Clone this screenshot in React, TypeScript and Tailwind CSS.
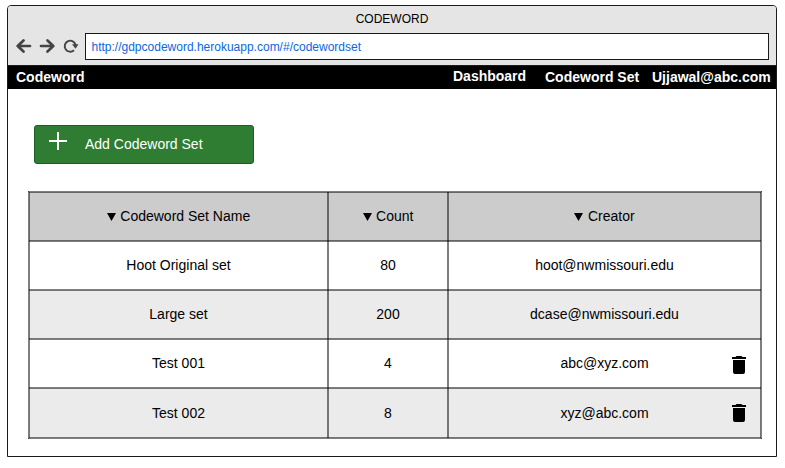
import type { ReactNode } from "react";

const cellLines =
  "shadow-[inset_1px_0_rgba(0,0,0,0.5),inset_-1px_0_rgba(0,0,0,0.5),inset_0_1px_rgba(0,0,0,0.5),inset_0_-1px_rgba(0,0,0,0.5)]";

const rows = [
  { name: "Hoot Original set", count: 80, creator: "hoot@nwmissouri.edu", look: "bg-white pt-[14px]" },
  { name: "Large set", count: 200, creator: "dcase@nwmissouri.edu", look: "bg-[#ebebeb] pt-[14px]" },
  { name: "Test 001", count: 4, creator: "abc@xyz.com", look: "bg-white pt-[14px]", bin: "top-[17px]" },
  { name: "Test 002", count: 8, creator: "xyz@abc.com", look: "bg-[#ebebeb] pt-[15px]", bin: "top-[16px]" },
];

function Cell({ className, children }: { className: string; children: ReactNode }) {
  return (
    <div className={`relative flex items-start justify-center leading-[20px] ${cellLines} ${className}`}>
      {children}
    </div>
  );
}

function Heading({ children }: { children: ReactNode }) {
  return (
    <Cell className="bg-[#cccccc] pt-[14px]">
      <svg className="mt-[7px] mr-[4.5px] h-[8px] w-[9px]" viewBox="0 0 9 8">
        <path d="M0 0H9L4.5 8Z" />
      </svg>
      {children}
    </Cell>
  );
}

function Trash({ className }: { className: string }) {
  return (
    <svg className={`absolute right-[15px] h-[18px] w-[14px] ${className}`} viewBox="0 0 14 18">
      <path d="M1 4H13V16Q13 18 11 18H3Q1 18 1 16ZM0 1H3.5L4.5 0H9.5L10.500 1H14V3H0Z" />
    </svg>
  );
}

function Toolbar() {
  return (
    <div className="flex h-[59px] flex-col bg-[#e5e5e5]">
      <div className="h-[27px] pt-[4px] text-center text-[12px] leading-[18px]">CODEWORD</div>
      <div className="flex h-[27px] pr-[7px] pl-[8px]">
        <svg className="h-[27px] w-[69px] shrink-0" viewBox="16 33 69 27" fill="none" stroke="#444">
          <path
            d="M30 46H18M23.500 40.500L17.700 46L23.500 51.500"
            strokeWidth="2.700"
            strokeLinecap="round"
            strokeLinejoin="round"
          />
          <path
            d="M41 46H53M47.500 40.500L53.300 46L47.500 51.500"
            strokeWidth="2.700"
            strokeLinecap="round"
            strokeLinejoin="round"
          />
          <path d="M74 50.200A5.500 5.500 0 1 1 75.600 45" strokeWidth="1.900" />
          <path d="M72 44.300H78.500L75.500 48.800Z" fill="#444" stroke="none" />
        </svg>
        <div className="flex-1 border border-[#1a1a1a] bg-white pt-[4px] pl-[5.5px] text-[12px] leading-[18px] text-[#0d66e0]">
          http://gdpcodeword.herokuapp.com/#/codewordset
        </div>
      </div>
    </div>
  );
}

export default function App() {
  return (
    <div className="h-[468px] w-[785px] bg-white pt-[5px] pl-[7px] font-['Liberation_Sans',Arial,sans-serif] text-[14px] text-black">
      <div className="h-[452px] w-[770px] overflow-hidden rounded-t-[4px] border border-[#1a1a1a]">
        <Toolbar />
        <nav className="flex h-[24px] border-t border-[#1a1a1a] bg-black pl-[8px] text-[14px] leading-[22px] font-bold text-white">
          <span className="w-[437px]">Codeword</span>
          <span className="-mt-px w-[92px]">Dashboard</span>
          <span className="w-[107px]">Codeword Set</span>
          <span>Ujjawal@abc.com</span>
        </nav>
        <main className="pt-[36px] pl-[20px]">
          <button className="ml-[6px] flex h-[39px] w-[220px] items-center rounded-[3px] border border-[#1b5e20] bg-[#2e7d32] pl-[14px] text-white">
            <svg className="mt-[-7px] mr-[18px] h-[18px] w-[18px]" viewBox="0 0 18 18">
              <path d="M8 0H10V8H18V10H10V18H8V10H0V8H8Z" fill="white" />
            </svg>
            Add Codeword Set
          </button>
          <div
            className={`mt-[27px] grid h-[248px] w-[734px] grid-cols-[299px_120px_313px] grid-rows-[49px_49px_49px_49px_50px] p-px ${cellLines}`}
          >
            <Heading>Codeword Set Name</Heading>
            <Heading>Count</Heading>
            <Heading>Creator</Heading>
            {rows.map((row) => (
              <div key={row.name} className="contents">
                <Cell className={row.look}>{row.name}</Cell>
                <Cell className={row.look}>{row.count}</Cell>
                <Cell className={row.look}>
                  {row.creator}
                  {row.bin && <Trash className={row.bin} />}
                </Cell>
              </div>
            ))}
          </div>
        </main>
      </div>
    </div>
  );
}
